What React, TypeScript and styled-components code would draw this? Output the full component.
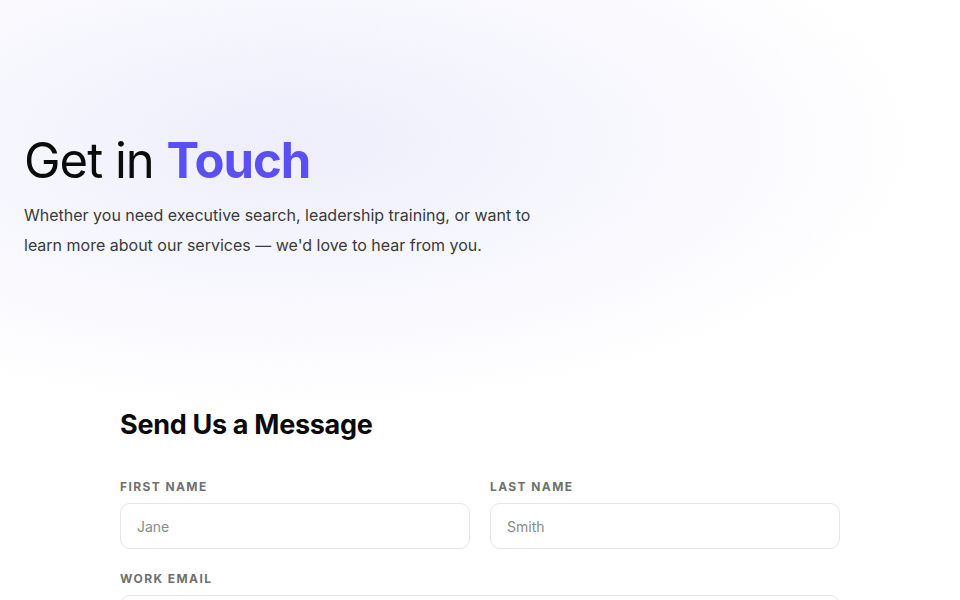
import React from "react";
import styled, { createGlobalStyle } from "styled-components";

const GlobalStyle = createGlobalStyle`
	* {
		box-sizing: border-box;
	}
	body {
		margin: 0;
		background: #ffffff;
		font-family: Inter, "Noto Sans", sans-serif;
		color: #111111;
	}
`;

const Page = styled.div`
	min-height: 600px;
	background:
		radial-gradient(ellipse 640px 270px at 30% 22%, rgba(238, 238, 252, 1) 0%, rgba(243, 243, 253, 0.7) 50%, rgba(255, 255, 255, 0) 100%),
		#ffffff;
`;

const Hero = styled.section`
	padding: 130px 24px 104px;
`;

const Title = styled.h1`
	margin: 0 0 9px;
	font-size: 49px;
	font-weight: 400;
	letter-spacing: -1px;
	line-height: 1.25;
	color: #0b0b0b;
`;

const Accent = styled.span`
	font-weight: 700;
	color: #5a4ff3;
`;

const Lead = styled.p`
	margin: 0;
	max-width: 530px;
	font-size: 16px;
	line-height: 30px;
	color: #3a3a3a;
`;

const FormSection = styled.section`
	width: 720px;
	margin: 0 auto;
	padding-top: 44px;
`;

const FormTitle = styled.h2`
	margin: 0 0 38px;
	font-size: 27px;
	font-weight: 700;
	letter-spacing: -0.3px;
	color: #0a0a0a;
`;

const Row = styled.div`
	display: grid;
	grid-template-columns: 1fr 1fr;
	gap: 20px;
	margin-bottom: 22px;
`;

const Field = styled.div`
	display: flex;
	flex-direction: column;
	gap: 9px;
`;

const Label = styled.label`
	font-size: 12px;
	font-weight: 700;
	letter-spacing: 1.4px;
	text-transform: uppercase;
	color: #707070;
`;

const Input = styled.input`
	height: 46px;
	padding: 0 16px;
	border: 1px solid #e6e6e6;
	border-radius: 10px;
	background: #ffffff;
	font-family: inherit;
	font-size: 14px;
	color: #222222;
	outline: none;

	&::placeholder {
		color: #8a8a8a;
	}
`;

export default function App() {
	return (
		<Page>
			<GlobalStyle />
			<Hero>
				<Title>
					Get in <Accent>Touch</Accent>
				</Title>
				<Lead>
					Whether you need executive search, leadership training, or want to learn more about our
					services — we'd love to hear from you.
				</Lead>
			</Hero>
			<FormSection>
				<FormTitle>Send Us a Message</FormTitle>
				<Row>
					<Field>
						<Label>First Name</Label>
						<Input placeholder="Jane" />
					</Field>
					<Field>
						<Label>Last Name</Label>
						<Input placeholder="Smith" />
					</Field>
				</Row>
				<Field>
					<Label>Work Email</Label>
					<Input placeholder="jane@company.com" />
				</Field>
			</FormSection>
		</Page>
	);
}
